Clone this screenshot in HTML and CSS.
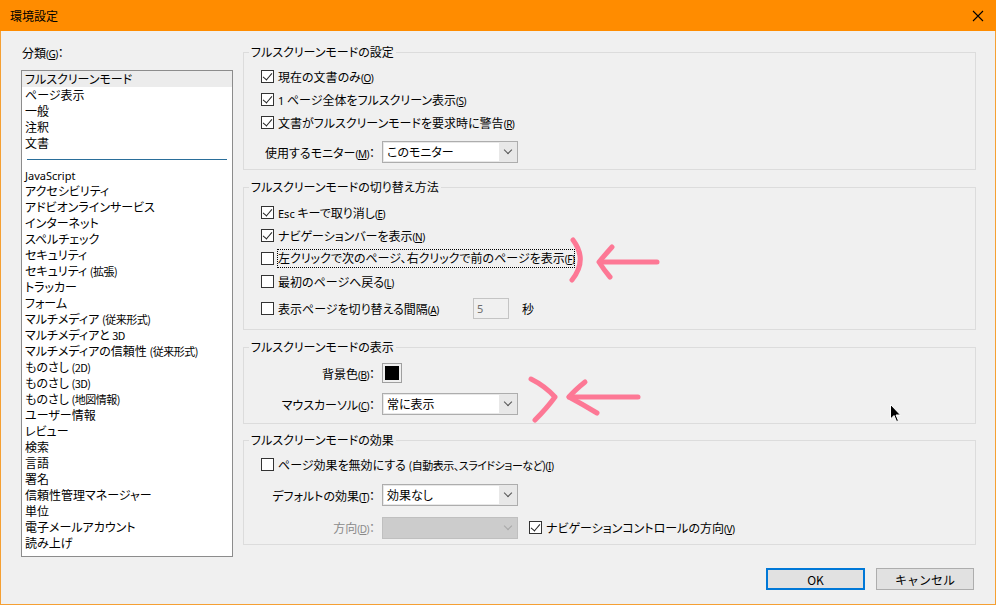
FILE: index.html
```html
<!DOCTYPE html>
<html lang="ja">
<head>
  <meta charset="UTF-8" />
  <title>環境設定</title>
  <link rel="stylesheet" href="styles.css">
</head>
<body>
  <div class="window">
    <div class="titlebar">
      <span class="title">環境設定</span>
      <svg class="close" width="12" height="12" viewBox="0 0 12 12">
        <path d="M1 1 L11 11 M11 1 L1 11" stroke="#000" stroke-width="1.1" fill="none"/>
      </svg>
    </div>

    <div class="main">
      <div class="categories">
        <div class="cat-label">分類<span class="key">(<u>G</u>)</span>：</div>
        <ul class="cat-list">
          <li class="selected">フルスクリーンモード</li>
          <li>ページ表示</li>
          <li>一般</li>
          <li>注釈</li>
          <li>文書</li>
          <li class="sep"></li>
          <li class="latin">JavaScript</li>
          <li>アクセシビリティ</li>
          <li>アドビオンラインサービス</li>
          <li>インターネット</li>
          <li>スペルチェック</li>
          <li>セキュリティ</li>
          <li>セキュリティ <span class="small">(拡張)</span></li>
          <li>トラッカー</li>
          <li>フォーム</li>
          <li>マルチメディア <span class="small">(従来形式)</span></li>
          <li>マルチメディアと <span class="small">3D</span></li>
          <li>マルチメディアの信頼性 <span class="small">(従来形式)</span></li>
          <li>ものさし <span class="small">(2D)</span></li>
          <li>ものさし <span class="small">(3D)</span></li>
          <li>ものさし <span class="small">(地図情報)</span></li>
          <li>ユーザー情報</li>
          <li>レビュー</li>
          <li>検索</li>
          <li>言語</li>
          <li>署名</li>
          <li>信頼性管理マネージャー</li>
          <li>単位</li>
          <li>電子メールアカウント</li>
          <li>読み上げ</li>
        </ul>
      </div>

      <div class="panels">
        <fieldset class="group g-settings">
          <legend>フルスクリーンモードの設定</legend>
          <div class="check"><span class="box on"></span><span>現在の文書のみ<span class="key">(<u>O</u>)</span></span></div>
          <div class="check"><span class="box on"></span><span><span class="latin">1</span> ページ全体をフルスクリーン表示<span class="key">(<u>S</u>)</span></span></div>
          <div class="check"><span class="box on"></span><span>文書がフルスクリーンモードを要求時に警告<span class="key">(<u>R</u>)</span></span></div>
          <div class="field">
            <span class="field-label">使用するモニター<span class="key">(<u>M</u>)</span>：</span>
            <div class="combo"><span class="combo-text">このモニター</span><span class="combo-arrow"></span></div>
          </div>
        </fieldset>

        <fieldset class="group g-switch">
          <legend>フルスクリーンモードの切り替え方法</legend>
          <div class="check"><span class="box on"></span><span><span class="latin">Esc</span> キーで取り消し<span class="key">(<u>E</u>)</span></span></div>
          <div class="check"><span class="box on"></span><span>ナビゲーションバーを表示<span class="key">(<u>N</u>)</span></span></div>
          <div class="check"><span class="box"></span><span class="focused">左クリックで次のページ、右クリックで前のページを表示<span class="key">(<u>F</u>)</span></span></div>
          <div class="check"><span class="box"></span><span>最初のページへ戻る<span class="key">(<u>L</u>)</span></span></div>
          <div class="check interval">
            <span class="box"></span><span class="interval-label">表示ページを切り替える間隔<span class="key">(<u>A</u>)</span></span>
            <span class="spin">5</span>
            <span class="unit">秒</span>
          </div>
        </fieldset>

        <fieldset class="group g-display">
          <legend>フルスクリーンモードの表示</legend>
          <div class="field">
            <span class="field-label">背景色<span class="key">(<u>B</u>)</span>：</span>
            <span class="swatch"><span></span></span>
          </div>
          <div class="field">
            <span class="field-label">マウスカーソル<span class="key">(<u>C</u>)</span>：</span>
            <div class="combo"><span class="combo-text">常に表示</span><span class="combo-arrow"></span></div>
          </div>
        </fieldset>

        <fieldset class="group g-effects">
          <legend>フルスクリーンモードの効果</legend>
          <div class="check"><span class="box"></span><span>ページ効果を無効にする <span class="small">(自動表示、スライドショーなど)</span><span class="key">(<u>I</u>)</span></span></div>
          <div class="field">
            <span class="field-label">デフォルトの効果<span class="key">(<u>T</u>)</span>：</span>
            <div class="combo"><span class="combo-text">効果なし</span><span class="combo-arrow"></span></div>
          </div>
          <div class="field">
            <span class="field-label disabled">方向<span class="key">(<u>D</u>)</span>：</span>
            <div class="combo off"><span class="combo-text"></span><span class="combo-arrow"></span></div>
            <div class="check inline"><span class="box on"></span><span>ナビゲーションコントロールの方向<span class="key">(<u>V</u>)</span></span></div>
          </div>
        </fieldset>
      </div>
    </div>

    <div class="actions">
      <button class="btn default">OK</button>
      <button class="btn">キャンセル</button>
    </div>

    <!-- hand-drawn annotations over the dialog -->
    <svg class="marks" width="996" height="605" viewBox="0 0 996 605">
      <g fill="none" stroke="#ff6c8c" stroke-width="5" stroke-linecap="round" stroke-linejoin="round" opacity="0.9">
        <path d="M573 240 Q588 260 572 280"/>
        <path d="M600 262 L657 262"/>
        <path d="M612 247 Q604 256 599 262 Q604 270 610 277"/>
        <path d="M531 379 Q545 386 555 397 Q547 408 535 420"/>
        <path d="M569 397 L638 397"/>
        <path d="M585 382 Q575 390 569 397 Q582 404 597 413"/>
      </g>
    </svg>

    <svg class="cursor" width="12" height="19" viewBox="0 0 12 19">
      <path d="M0.5 0.5 L0.5 15 L4 11.5 L6.5 17.5 L8.5 16.7 L6 11 L10.5 11 Z" fill="#000" stroke="#fff" stroke-width="1"/>
    </svg>
  </div>
</body>
</html>
```

FILE: styles.css
```css
body {
  margin: 0;
  font-family: "Noto Sans CJK JP", "Noto Sans", sans-serif;
  font-feature-settings: "palt";
  font-size: 12px;
  color: #000;
}

.window {
  position: relative;
  width: 996px;
  height: 605px;
  box-sizing: border-box;
  background: #f0f0f0;
  border: 1px solid #f5a033;
  border-top: none;
  display: flex;
  flex-direction: column;
}

.titlebar {
  height: 31px;
  margin: 0 -1px;
  background: #ff8c00;
  display: flex;
  align-items: center;
  justify-content: space-between;
  padding: 0 12px 0 10px;
  flex-shrink: 0;
}

.title {
  font-size: 12px;
  line-height: 16px;
}

.close {
  display: block;
}

.main {
  display: flex;
  gap: 10px;
  padding: 13px 0 0 20px;
}

.key {
  font-family: "Noto Sans", sans-serif;
  font-size: 10px;
  letter-spacing: -0.5px;
}

.key u {
  text-underline-offset: 1px;
}

.latin {
  font-family: "Noto Sans", sans-serif;
  font-size: 11px;
}

.small {
  font-size: 11px;
  letter-spacing: -0.5px;
}

/* category list */
.categories {
  width: 212px;
}

.cat-label {
  padding-top: 1px;
  line-height: 16px;
  margin-bottom: 8px;
  padding-left: 1px;
}

.cat-list {
  list-style: none;
  margin: 0;
  padding: 0;
  height: 487px;
  box-sizing: border-box;
  background: #fff;
  border: 1px solid #8c8c8c;
  overflow: hidden;
}

.cat-list li {
  line-height: 16px;
  height: 16px;
  padding-left: 3px;
  white-space: nowrap;
}

.cat-list li.selected {
  background: #ececec;
}

.cat-list li.sep {
  height: 1px;
  margin: 8px 5px;
  padding: 0;
  background: #2a6e9a;
}

.cat-list li.latin {
  height: 15px;
  line-height: 15px;
  font-size: 11px;
}

/* option groups */
.panels {
  width: 733px;
  display: flex;
  flex-direction: column;
}

.group {
  margin: 0;
  border: 1px solid #dcdcdc;
  padding: 5px 0 6px 17px;
  min-width: 0;
}

.group legend {
  line-height: 16px;
  padding: 0 2px;
  margin-left: -12px;
}

.g-switch { margin-top: 9px; padding-top: 6px; padding-bottom: 9px; }
.g-display { margin-top: 9px; padding-top: 8px; padding-bottom: 8px; }
.g-effects { margin-top: 8px; padding-bottom: 5px; }

.check {
  display: flex;
  align-items: center;
  gap: 4px;
  height: 23px;
  white-space: nowrap;
}

.box {
  width: 13px;
  height: 13px;
  box-sizing: border-box;
  border: 1px solid #333;
  background: #fff;
  position: relative;
  flex-shrink: 0;
}

.box.on::after {
  content: "";
  position: absolute;
  left: 3px;
  top: 0px;
  width: 4px;
  height: 8px;
  border: solid #222;
  border-width: 0 1px 1px 0;
  transform: rotate(40deg);
}

.focused {
  outline: 1px dotted #000;
  outline-offset: 0;
  line-height: 16px;
}

.interval {
  margin-top: 4px;
  height: 23px;
}

.interval-label {
  width: 191px;
}

.spin {
  width: 36px;
  height: 21px;
  box-sizing: border-box;
  border: 1px solid #c4c4c4;
  color: #6d6d6d;
  font-family: "Noto Sans", sans-serif;
  font-size: 11px;
  line-height: 19px;
  padding-left: 3px;
}

.unit {
  margin-left: 9px;
}

.field {
  display: flex;
  align-items: center;
  gap: 7px;
  white-space: nowrap;
}

.g-settings .field { margin-top: 7px; }
.g-display .field + .field { margin-top: 10px; }
.g-effects .field { margin-top: 8px; }
.g-effects .field + .field { margin-top: 10px; }

.field-label {
  width: 114px;
  text-align: right;
  flex-shrink: 0;
}

.field-label.disabled {
  color: #8a8a8a;
}

.combo {
  width: 136px;
  height: 22px;
  box-sizing: border-box;
  border: 1px solid #adadad;
  background: #e8e8e8;
  display: flex;
}

.combo-text {
  flex: 1;
  background: #fff;
  margin: 1px 0 1px 1px;
  padding-left: 3px;
  line-height: 18px;
}

.combo-arrow {
  width: 18px;
  position: relative;
}

.combo-arrow::after {
  content: "";
  position: absolute;
  left: 6px;
  top: 5px;
  width: 5px;
  height: 5px;
  border: solid #555;
  border-width: 0 1px 1px 0;
  transform: rotate(45deg);
}

.combo.off {
  background: #cccccc;
  border-color: #bfbfbf;
}

.combo.off .combo-text {
  background: transparent;
}

.combo.off .combo-arrow::after {
  border-color: #a8a8a8;
}

.check.inline {
  margin-left: 4px;
}

.swatch {
  width: 20px;
  height: 20px;
  box-sizing: border-box;
  border: 1px solid #a0a0a0;
  padding: 2px;
  background: #f0f0f0;
}

.swatch span {
  display: block;
  width: 14px;
  height: 14px;
  background: #000;
}

/* dialog buttons */
.actions {
  display: flex;
  justify-content: flex-end;
  gap: 11px;
  padding: 0 21px 0 0;
  margin-top: 11px;
}

.btn {
  width: 98px;
  height: 22px;
  box-sizing: border-box;
  border: 1px solid #adadad;
  background: #e1e1e1;
  font-family: inherit;
  font-size: 12px;
  padding: 0;
}

.btn.default {
  width: 99px;
  border: 2px solid #0078d7;
}

.marks {
  position: absolute;
  left: -1px;
  top: 0;
  pointer-events: none;
}

.cursor {
  position: absolute;
  left: 889px;
  top: 404px;
}
```
